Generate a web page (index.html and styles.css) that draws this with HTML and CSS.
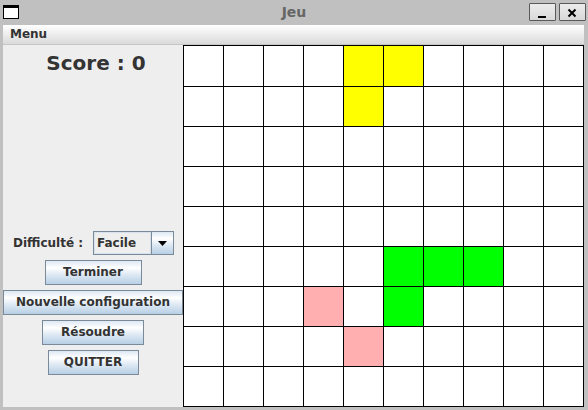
FILE: index.html
```html
<!DOCTYPE html>
<html lang="fr">
<head>
<meta charset="utf-8">
<title>Jeu</title>
<link rel="stylesheet" href="styles.css">
</head>
<body>
<div class="window">
  <div class="titlebar">
    <div class="title-left"><span class="win-icon"></span></div>
    <div class="title">Jeu</div>
    <div class="title-right">
      <span class="win-btn"><svg width="25" height="16" viewBox="0 0 25 16"><rect x="8" y="12" width="8" height="2" fill="#000"/></svg></span>
      <span class="win-btn"><svg width="25" height="16" viewBox="0 0 25 16"><path d="M8.5 5.5 L15.5 12.5 M15.5 5.5 L8.5 12.5" stroke="#000" stroke-width="2" fill="none"/></svg></span>
    </div>
  </div>
  <div class="frame">
    <div class="menubar"><span class="menu">Menu</span></div>
    <div class="content">
      <div class="panel">
        <div class="score">Score : 0</div>
        <div class="controls">
          <div class="diff-row">
            <span class="label">Difficulté :</span>
            <div class="combo">
              <div class="combo-value">Facile</div>
              <div class="combo-arrow"><svg width="9" height="5" viewBox="0 0 9 5"><path d="M0 0 H9 L4.5 5 Z" fill="#000"/></svg></div>
            </div>
          </div>
          <div class="btn btn-terminer">Terminer</div>
          <div class="btn btn-full">Nouvelle configuration</div>
          <div class="btn btn-resoudre">Résoudre</div>
          <div class="btn btn-quitter">QUITTER</div>
        </div>
      </div>
      <div class="grid">
        <div class="cell"></div><div class="cell"></div><div class="cell"></div><div class="cell"></div><div class="cell yellow"></div><div class="cell yellow"></div><div class="cell"></div><div class="cell"></div><div class="cell"></div><div class="cell"></div>
        <div class="cell"></div><div class="cell"></div><div class="cell"></div><div class="cell"></div><div class="cell yellow"></div><div class="cell"></div><div class="cell"></div><div class="cell"></div><div class="cell"></div><div class="cell"></div>
        <div class="cell"></div><div class="cell"></div><div class="cell"></div><div class="cell"></div><div class="cell"></div><div class="cell"></div><div class="cell"></div><div class="cell"></div><div class="cell"></div><div class="cell"></div>
        <div class="cell"></div><div class="cell"></div><div class="cell"></div><div class="cell"></div><div class="cell"></div><div class="cell"></div><div class="cell"></div><div class="cell"></div><div class="cell"></div><div class="cell"></div>
        <div class="cell"></div><div class="cell"></div><div class="cell"></div><div class="cell"></div><div class="cell"></div><div class="cell"></div><div class="cell"></div><div class="cell"></div><div class="cell"></div><div class="cell"></div>
        <div class="cell"></div><div class="cell"></div><div class="cell"></div><div class="cell"></div><div class="cell"></div><div class="cell green"></div><div class="cell green"></div><div class="cell green"></div><div class="cell"></div><div class="cell"></div>
        <div class="cell"></div><div class="cell"></div><div class="cell"></div><div class="cell pink"></div><div class="cell"></div><div class="cell green"></div><div class="cell"></div><div class="cell"></div><div class="cell"></div><div class="cell"></div>
        <div class="cell"></div><div class="cell"></div><div class="cell"></div><div class="cell"></div><div class="cell pink"></div><div class="cell"></div><div class="cell"></div><div class="cell"></div><div class="cell"></div><div class="cell"></div>
        <div class="cell"></div><div class="cell"></div><div class="cell"></div><div class="cell"></div><div class="cell"></div><div class="cell"></div><div class="cell"></div><div class="cell"></div><div class="cell"></div><div class="cell"></div>
      </div>
    </div>
  </div>
</div>
</body>
</html>
```
FILE: styles.css
```css
* { box-sizing: border-box; }
html, body { margin: 0; padding: 0; }
body {
  width: 588px;
  height: 410px;
  overflow: hidden;
  background: #c0c0c0;
  font-family: "DejaVu Sans", "Liberation Sans", sans-serif;
  font-weight: bold;
  font-size: 12px;
  color: #333333;
}
.window {
  width: 588px;
  height: 410px;
  display: flex;
  flex-direction: column;
  background: #c0c0c0;
}
.titlebar {
  height: 25px;
  display: grid;
  grid-template-columns: 1fr auto 1fr;
  align-items: start;
  padding-top: 3px;
}
.title-left { padding-left: 3px; padding-top: 2px; }
.win-icon {
  display: block;
  width: 16px;
  height: 14px;
  background: #fff;
  border: 1px solid #000;
  border-top-width: 3px;
}
.title {
  font-size: 14px;
  line-height: 17px;
  margin-top: 1px;
  color: #666666;
}
.title-right {
  justify-self: end;
  display: flex;
  gap: 3px;
  padding-right: 2px;
}
.win-btn {
  display: block;
  width: 27px;
  height: 18px;
  border: 1px solid #5a5a5a;
  border-radius: 1px;
  background: linear-gradient(#ececec, #d8d8d8);
}
.win-btn svg { display: block; }
.frame {
  flex: 1;
  display: flex;
  flex-direction: column;
  padding: 0 4px 3px 3px;
}
.menubar {
  height: 20px;
  background: linear-gradient(#ffffff, #dadada);
  border-bottom: 1px solid #c6c6c6;
  padding-left: 7px;
  line-height: 19px;
  font-size: 12px;
}
.content {
  display: flex;
  height: 362px;
}
.panel {
  width: 180px;
  background: #eeeeee;
  display: flex;
  flex-direction: column;
  align-items: center;
  padding-top: 6px;
  padding-bottom: 32px;
}
.score {
  font-size: 20px;
  line-height: 24px;
  padding-left: 6px;
}
.controls {
  margin-top: auto;
  width: 100%;
  display: flex;
  flex-direction: column;
  align-items: center;
  gap: 5px;
}
.diff-row {
  display: flex;
  align-items: center;
  gap: 10px;
  height: 24px;
  padding-left: 1px;
}
.label { line-height: 15px; }
.combo {
  display: flex;
  width: 81px;
  height: 24px;
  border: 1px solid #7a8a99;
}
.combo-value {
  flex: 1;
  background: #eeeeee;
  box-shadow: inset 1px 1px 0 #d8e2ee, inset -1px -1px 0 #d8e2ee;
  padding-left: 3px;
  line-height: 22px;
}
.combo-arrow {
  width: 22px;
  border-left: 1px solid #7a8a99;
  background: linear-gradient(#dde8f3 0%, #ffffff 30%, #dde8f3 60%, #b8cfe5 100%);
  display: flex;
  align-items: center;
  justify-content: center;
}
.combo-arrow svg { display: block; }
.btn {
  height: 25px;
  border: 1px solid #7a8a99;
  background: linear-gradient(#dde8f3 0%, #ffffff 30%, #dde8f3 60%, #b8cfe5 100%);
  display: flex;
  align-items: center;
  justify-content: center;
  white-space: nowrap;
  line-height: 15px;
}
.btn-terminer { width: 97px; }
.btn-full { width: 180px; }
.btn-resoudre { width: 102px; }
.btn-quitter { width: 91px; }
.grid {
  width: 401px;
  height: 362px;
  display: grid;
  grid-template-columns: repeat(10, 39px);
  grid-template-rows: 40px repeat(8, 39px);
  gap: 1px;
  padding: 1px;
  background: #000000;
}
.cell { background: #ffffff; }
.cell.yellow { background: #ffff00; }
.cell.green { background: #00ff00; }
.cell.pink { background: #ffafaf; }
```
